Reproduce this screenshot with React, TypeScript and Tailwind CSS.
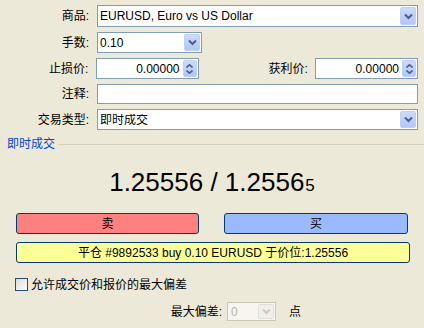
import React from 'react'

const FONT = { fontFamily: '"Liberation Sans", "Noto Sans CJK SC", sans-serif' }

const Chevron = ({ color = '#4d6185' }: { color?: string }) => (
  <svg width="9" height="7" viewBox="0 0 9 7">
    <path d="M1 1.5 L4.5 5 L8 1.5" fill="none" stroke={color} strokeWidth="2" />
  </svg>
)

const DropButton = ({ disabled }: { disabled?: boolean }) => (
  <div
    className={
      'flex items-center justify-center w-[16px] h-full rounded-[2px] ' +
      (disabled
        ? 'bg-[#f0f0ea] border border-[#e0e0d8]'
        : 'bg-gradient-to-b from-[#cbdaff] to-[#b2c7f7] border border-[#c0cff5]')
    }
  >
    <Chevron color={disabled ? '#c9c9c0' : '#4d6185'} />
  </div>
)

const Select = ({ value, width, height = 'h-[21px]' }: { value: string; width: string; height?: string }) => (
  <div className={`flex items-center ${width} ${height} bg-white border border-[#7f9db9] pl-[2px] pr-[1px] py-[1px]`}>
    <span className="flex-1 text-[12px] leading-none text-black truncate">{value}</span>
    <DropButton />
  </div>
)

const Spinner = ({ value, width }: { value: string; width: string }) => (
  <div className={`flex items-center ${width} h-[21px] bg-white border border-[#7f9db9] pr-[1px] py-[1px]`}>
    <span className="flex-1 text-right pr-[3px] text-[12px] leading-none text-black">{value}</span>
    <div className="flex flex-col w-[14px] h-full rounded-[2px] bg-gradient-to-b from-[#cbdaff] to-[#b2c7f7] border border-[#c0cff5] items-center justify-center gap-[2px]">
      <svg width="7" height="4" viewBox="0 0 7 4">
        <path d="M0.5 3.5 L3.5 0.8 L6.5 3.5" fill="none" stroke="#4d6185" strokeWidth="1.6" />
      </svg>
      <svg width="7" height="4" viewBox="0 0 7 4">
        <path d="M0.5 0.5 L3.5 3.2 L6.5 0.5" fill="none" stroke="#4d6185" strokeWidth="1.6" />
      </svg>
    </div>
  </div>
)

const Label = ({ children, width = 'w-[89px]' }: { children: React.ReactNode; width?: string }) => (
  <div className={`${width} text-right text-[12px] text-black leading-none`}>{children}</div>
)

export default function App() {
  return (
    <div className="w-[424px] h-[328px] bg-[#ece9d8] overflow-hidden" style={FONT}>
      {/* order fields */}
      <div className="flex flex-col gap-[5px] pt-[5px] pr-[6px]">
        <div className="flex items-center gap-[8px]">
          <Label>商品:</Label>
          <Select value="EURUSD, Euro vs US Dollar" width="w-[321px]" height="h-[22px]" />
        </div>
        <div className="flex items-center gap-[8px]">
          <Label>手数:</Label>
          <Select value="0.10" width="w-[105px]" />
        </div>
        <div className="flex items-center gap-[8px]">
          <Label>止损价:</Label>
          <Spinner value="0.00000" width="w-[103px]" />
          <Label width="w-[102px]">获利价:</Label>
          <Spinner value="0.00000" width="w-[104px] ml-[-1px]" />
        </div>
        <div className="flex items-center gap-[8px]">
          <Label>注释:</Label>
          <div className="w-[321px] h-[20px] bg-white border border-[#7f9db9]" />
        </div>
        <div className="flex items-center gap-[8px]">
          <Label>交易类型:</Label>
          <Select value="即时成交" width="w-[321px]" />
        </div>
      </div>

      {/* group header */}
      <div className="flex items-center mt-[7px] pl-[7px]">
        <span className="text-[12px] leading-[14px] text-[#0046d5]">即时成交</span>
        <div className="flex-1 h-[1px] bg-[#d0d0bf] ml-[3px] mt-[1px]" />
      </div>

      {/* prices */}
      <div className="flex justify-center items-baseline mt-[16px] h-[30px] text-black">
        <span className="text-[26px] leading-[30px]">1.25556 / 1.2556</span>
        <span className="text-[17px] leading-[30px] ml-[1px]">5</span>
      </div>

      {/* buttons */}
      <div className="flex gap-[25px] mt-[16px] px-[16px]">
        <button className="w-[184px] h-[21px] rounded-[3px] border border-[#003c74] bg-[#ff8080] text-[12px] leading-none text-black">
          卖
        </button>
        <button className="w-[185px] h-[21px] rounded-[3px] border border-[#003c74] bg-[#9bb9ff] text-[12px] leading-none text-black">
          买
        </button>
      </div>
      <div className="mx-[16px] mt-[8px] w-[394px] h-[21px] rounded-[3px] border border-[#003c74] bg-[#ffff99] flex items-center justify-center text-[12px] leading-none text-black">
        平仓 #9892533 buy 0.10 EURUSD 于价位:1.25556
      </div>

      {/* deviation */}
      <div className="flex items-center mt-[15px] pl-[15px] gap-[3px]">
        <div className="w-[13px] h-[13px] border border-[#1c5180] bg-gradient-to-br from-[#dcdcd7] to-white" />
        <span className="text-[12px] leading-none text-black">允许成交价和报价的最大偏差</span>
      </div>
      <div className="flex items-center mt-[11px] gap-[5px]">
        <Label width="w-[222px]">最大偏差:</Label>
        <div className="flex items-center w-[49px] h-[19px] bg-[#f6f5ef] border border-[#c9c7ba] pl-[3px] pr-[1px] py-[1px]">
          <span className="flex-1 text-[12px] leading-none text-[#b8b6a8]">0</span>
          <DropButton disabled />
        </div>
        <span className="text-[12px] leading-none text-black ml-[8px]">点</span>
      </div>
    </div>
  )
}
